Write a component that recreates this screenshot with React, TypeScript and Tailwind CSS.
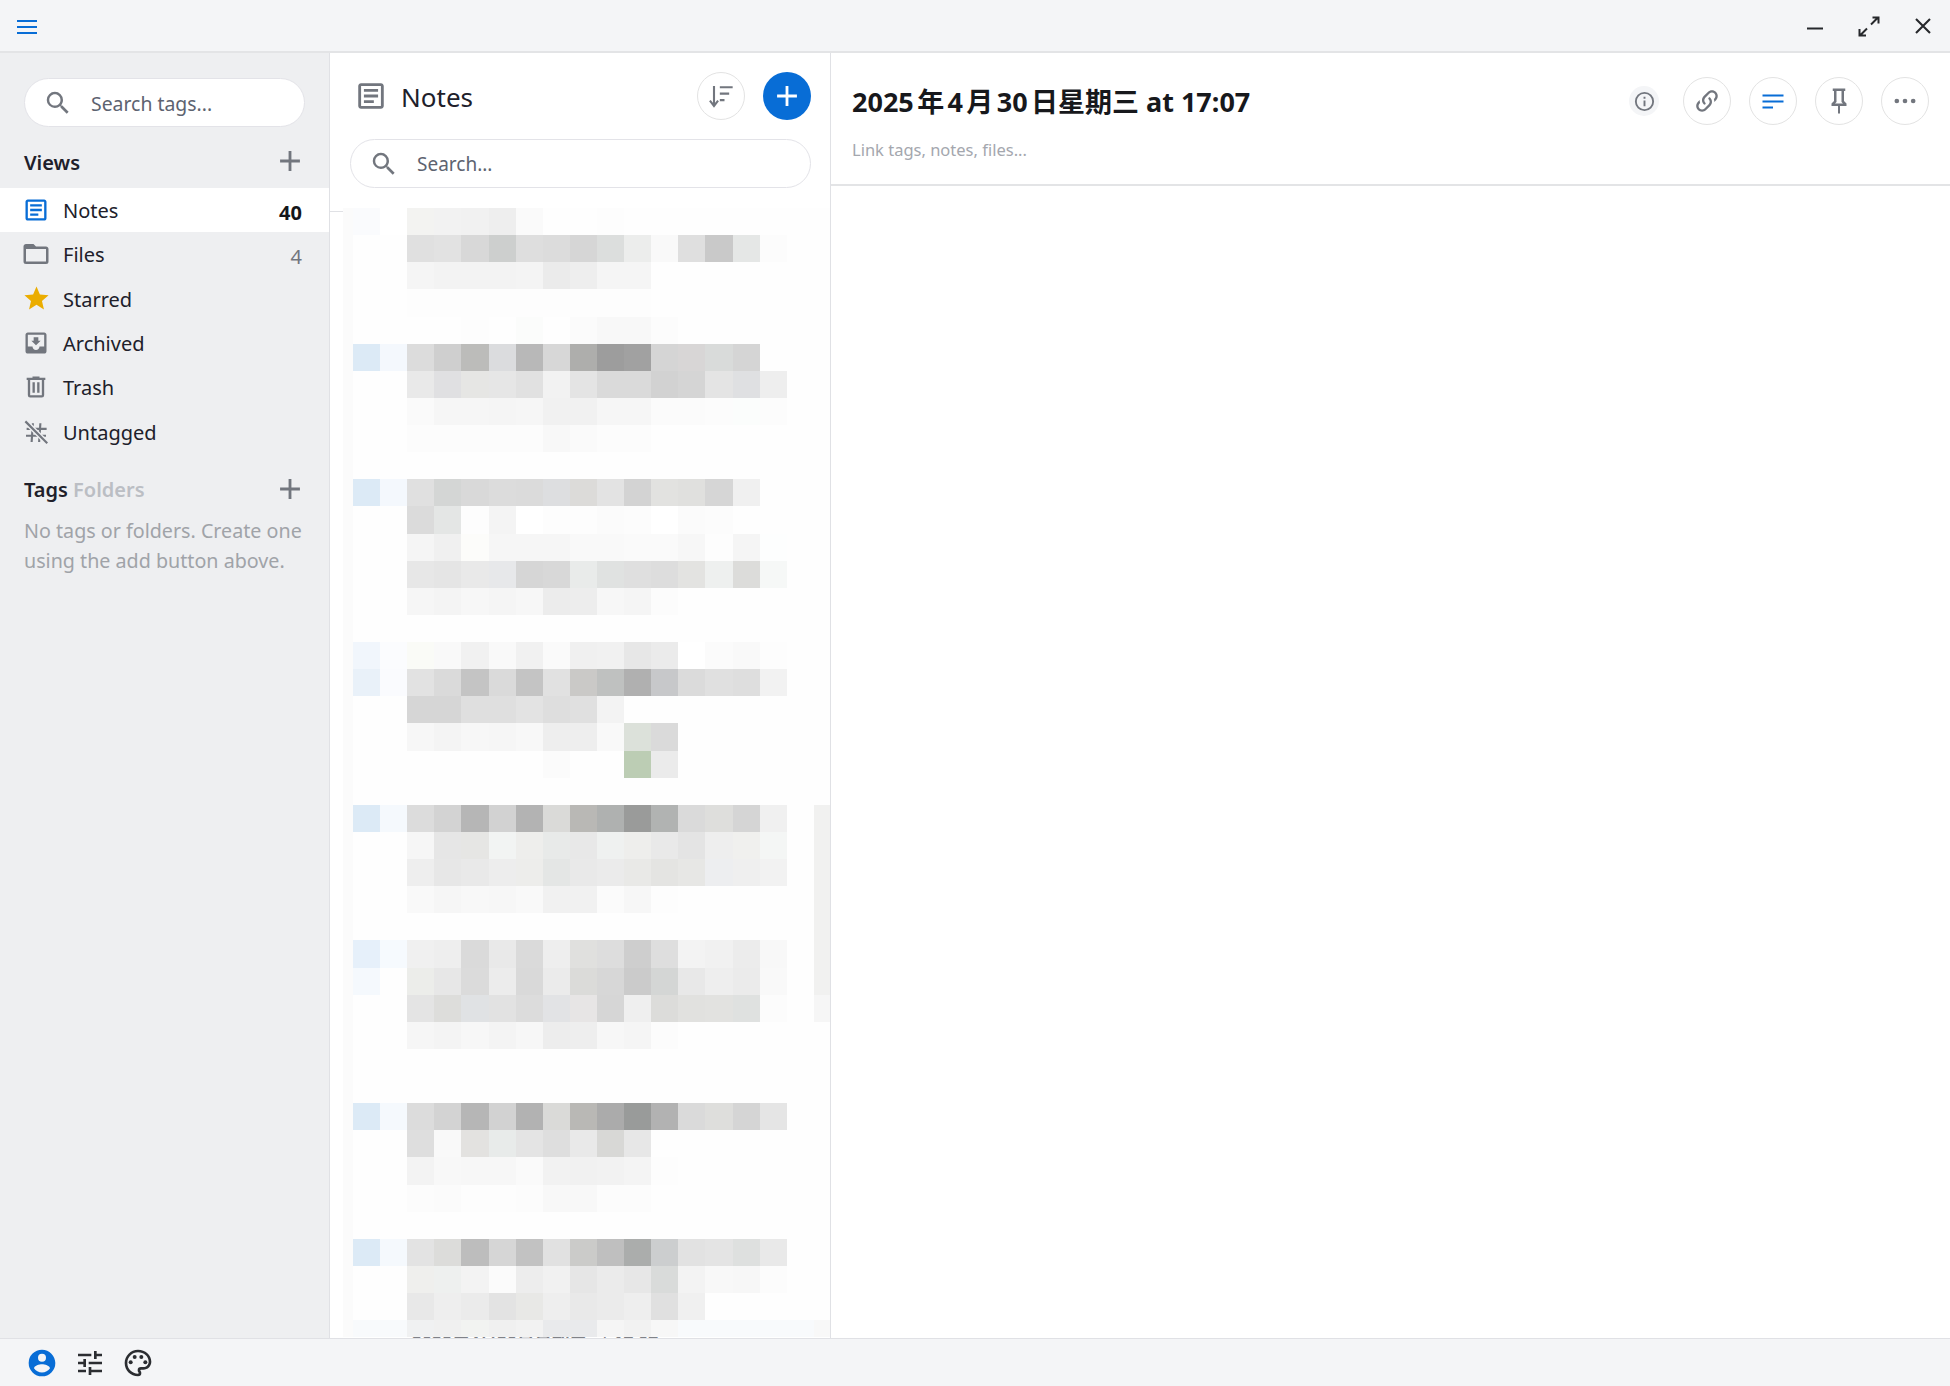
import React from "react";

const P = {
  note: "M5,3C3.89,3 3,3.89 3,5V19C3,20.11 3.89,21 5,21H19C20.11,21 21,20.11 21,19V5C21,3.89 20.11,3 19,3H5M5,5H19V19H5V5M7,7V9H17V7H7M7,11V13H17V11H7M7,15V17H14V15H7Z",
  folder: "M20,18H4V8H20M20,6H12L10,4H4C2.89,4 2,4.89 2,6V18A2,2 0 0,0 4,20H20A2,2 0 0,0 22,18V8C22,6.89 21.1,6 20,6Z",
  star: "M12,17.27L18.18,21L16.54,13.97L22,9.24L14.81,8.62L12,2L9.19,8.62L2,9.24L7.45,13.97L5.82,21L12,17.27Z",
  archive: "M19 3H5C3.9 3 3 3.9 3 5v14c0 1.1.9 2 2 2h14c1.1 0 2-.9 2-2V5c0-1.1-.9-2-2-2zm0 12h-4c0 1.66-1.35 3-3 3s-3-1.34-3-3H5V5h14v10zM16 10h-2V7h-4v3H8l4 4 4-4z",
  trash: "M9,3V4H4V6H5V19A2,2 0 0,0 7,21H17A2,2 0 0,0 19,19V6H20V4H15V3H9M7,6H17V19H7V6M9,8V17H11V8H9M13,8V17H15V8H13Z",
  search: "M9.5,3A6.5,6.5 0 0,1 16,9.5C16,11.11 15.41,12.59 14.44,13.73L14.71,14H15.5L20.5,19L19,20.5L14,15.5V14.71L13.73,14.44C12.59,15.41 11.11,16 9.5,16A6.5,6.5 0 0,1 3,9.5A6.5,6.5 0 0,1 9.5,3M9.5,5C7,5 5,7 5,9.5C5,12 7,14 9.5,14C12,14 14,12 14,9.5C14,7 12,5 9.5,5Z",
  plus: "M19,13H13V19H11V13H5V11H11V5H13V11H19V13Z",
  link: "M10.59,13.41C11,13.8 11,14.44 10.59,14.83C10.2,15.22 9.56,15.22 9.17,14.83C7.22,12.88 7.22,9.71 9.17,7.76V7.76L12.71,4.22C14.66,2.27 17.83,2.27 19.78,4.22C21.73,6.17 21.73,9.34 19.78,11.29L18.29,12.78C18.3,11.96 18.17,11.14 17.89,10.36L18.36,9.88C19.54,8.71 19.54,6.81 18.36,5.64C17.19,4.46 15.29,4.46 14.12,5.64L10.59,9.17C9.41,10.34 9.41,12.24 10.59,13.41M13.41,9.17C13.8,8.78 14.44,8.78 14.83,9.17C16.78,11.12 16.78,14.29 14.83,16.24V16.24L11.29,19.78C9.34,21.73 6.17,21.73 4.22,19.78C2.27,17.83 2.27,14.66 4.22,12.71L5.71,11.22C5.7,12.04 5.83,12.86 6.11,13.65L5.64,14.12C4.46,15.29 4.46,17.19 5.64,18.36C6.81,19.54 8.71,19.54 9.88,18.36L13.41,14.83C14.59,13.66 14.59,11.76 13.41,10.59C13,10.2 13,9.56 13.41,9.17Z",
  info: "M11,9H13V7H11M12,20C7.59,20 4,16.41 4,12C4,7.59 7.59,4 12,4C16.41,4 20,7.59 20,12C20,16.41 16.41,20 12,20M12,2A10,10 0 0,0 2,12A10,10 0 0,0 12,22A10,10 0 0,0 22,12A10,10 0 0,0 12,2M11,17H13V11H11V17Z",
  pin: "M16,12V4H17V2H7V4H8V12L6,14V16H11.2V22H12.8V16H18V14L16,12M8.8,14L10,12.8V4H14V12.8L15.2,14H8.8Z",
  account: "M12,19.2C9.5,19.2 7.29,17.92 6,16C6.03,14 10,12.9 12,12.9C14,12.9 17.97,14 18,16C16.71,17.92 14.5,19.2 12,19.2M12,5A3,3 0 0,1 15,8A3,3 0 0,1 12,11A3,3 0 0,1 9,8A3,3 0 0,1 12,5M12,2A10,10 0 0,0 2,12A10,10 0 0,0 12,22A10,10 0 0,0 22,12C22,6.47 17.5,2 12,2Z",
  tune: "M3,17V19H9V17H3M3,5V7H13V5H3M13,21V19H21V17H13V15H11V21H13M7,9V11H3V13H7V15H9V9H7M21,13V11H11V13H21M15,9H17V7H21V5H17V3H15V9Z",
  palette: "M12 22C6.49 22 2 17.51 2 12S6.49 2 12 2s10 4.04 10 9c0 3.31-2.69 6-6 6h-1.77c-.28 0-.5.22-.5.5 0 .12.05.23.13.33.41.47.64 1.06.64 1.67A2.5 2.5 0 0 1 12 22zm0-18c-4.41 0-8 3.59-8 8s3.59 8 8 8c.28 0 .5-.22.5-.5a.54.54 0 0 0-.14-.35c-.41-.46-.63-1.05-.63-1.65a2.5 2.5 0 0 1 2.5-2.5H16c2.21 0 4-1.79 4-4 0-3.86-3.59-7-8-7z",
};

function Icon({ d, size, className, children }: { d?: string; size: number; className?: string; children?: React.ReactNode }) {
  return (
    <svg width={size} height={size} viewBox="0 0 24 24" className={`shrink-0 fill-current ${className ?? ""}`}>
      {d && <path d={d} />}
      {children}
    </svg>
  );
}

const MOSAIC: Record<number, string> = {
  0: "fafbfd fff f3f3f1 f2f2f2 f1f1f1 eee fafafa . . fdfdfd",
  1: ". . e0e0e0 e2e2e2 d8d8d8 cdcfce dedede dcdcdc d6d6d6 dcdedd ecedec f9f9f9 dfdfdf c9c9c9 e5e7e6 fcfcfc",
  2: ". . f5f5f5 f3f3f3 f3f3f3 f3f3f3 f4f4f4 ebebeb eee f5f5f5 f5f5f5",
  3: ". . fdfdfd fdfdfd fdfdfd fdfdfd fdfdfd fdfdfd fdfdfd fdfdfd fdfdfd",
  4: ". . . . fdfdfd . fbfcfb . fbfbfb f8f8f8 f8f8f8 fcfcfc",
  5: "dceaf6 f4f8fd dcdcdc cfcfcf bcbcba dbdcde b8b8b8 d7d7d7 aeaeac 9d9d9d a1a1a1 d5d5d5 d8d6d6 d9dbda d5d5d5",
  6: ". . e9e9e9 e0e0e2 e6e6e4 e6e6e6 e1e1e1 f2f2f2 e4e4e4 dadada dadada d2d2d2 d5d5d5 e4e4e4 dfe0e2 eee",
  7: ". . fafafa f6f6f6 f6f6f6 f5f5f5 f6f6f6 f1f1f1 f1f1f1 f6f6f6 f6f6f6 fbfbfb fbfbfb fcfcfc fbfdfc fcfcfc",
  8: ". . fcfcfc fcfcfc fcfcfc fcfcfc fcfcfc f8f8f8 fafafa fcfcfc fcfcfc",
  10: "dceaf6 f4f8fd e0e0e0 d4d6d5 d9d9d9 dcdcdc dbdbdb dddee0 dcdbd9 e3e3e3 d3d3d3 e2e2e0 e0e0de d6d6d6 f0f0f0",
  11: ". . dbdbdb e4e6e5 fdfdfd f4f4f4 fff fdfdfd fdfdfd fbfbfb fcfcfc fff fbfbfb fcfcfc",
  12: ". . f5f5f5 f0f0f0 fcfcfa f6f6f6 f6f6f6 f6f6f6 f9f9f9 f9f9f9 fafafa fafafa f7f7f7 fdfdfd f5f5f5 fdfefe",
  13: ". . e7e7e7 e5e5e5 e9e9e9 e7e8ea d6d6d6 d8d8d8 e9ebea e0e2e1 dfdfdf ddd e3e3e1 eef0ef dcdcda f6f8f7",
  14: ". . f6f6f6 f4f4f4 f7f7f7 f5f5f5 f7f7f7 ececec ededed f7f7f7 f5f5f5 fcfcfc",
  16: "f1f6fc fbfcfe fafbf7 f9f9f9 f1f1f1 f9f9f9 f1f1f1 fafafa f0f0f0 f1f1f1 e7e7e7 ebebeb fff fbfbfb f9f9f9 fdfdfd",
  17: "e9f1f9 fafbfe e2e2e2 dadada c4c4c4 dadada c4c4c4 e1e1e1 cac9c7 bfc1c0 b0b0b0 c7c8ca dbdbdb e0e0e0 dedede f2f2f2",
  18: ". . d6d6d6 d6d6d6 dfdfdf dfdfdf e3e3e3 dedede e0e0e0 f3f3f3",
  19: ". . f7f7f7 f4f4f4 f7f7f7 f6f6f6 f8f8f8 eee eee f9f9f9 dce1da dadada",
  20: ". . . . . . . fbfbfb . . bccdb4 ebebeb",
  22: "dceaf6 f5f9fd dcdcdc d3d3d3 b6b6b6 d2d2d2 b3b3b3 dadad8 b9b8b5 afb1b0 9a9b9a b1b3b2 dadada dededc d5d5d5 f0f0f0 . f1f1f0",
  23: ". . f6f6f6 e6e6e6 e6e6e4 f2f4f3 eeeeec e8eae9 e8e8e8 eff1f0 eeeeec e9e9e9 e4e4e4 eee f0f0ee f4f6f5 . f1f1f0",
  24: ". . eee e7e7e7 e9e9e9 ededed ededeb e4e6e5 e9e9e9 ebebeb e9e9e7 e4e4e2 e7e7e5 edeef0 efefef f2f2f2 . f1f1f0",
  25: ". . f9f9f9 f6f6f6 f8f8f8 f7f7f7 f9f9f9 f1f1f1 f1f1f1 fbfbfb f7f7f7 fdfdfd . . . . . f1f1f0",
  26: ". . . . . . . . . . . . . . . . . f1f1f0",
  27: "e6f0fa f6fafe f0f0f0 eee dadada e9e9e9 dadada eee e0e0de ddd cecece dedede f3f3f3 f1f1f1 ececec f8f8f8 . f1f1f0",
  28: "f5f9fd . ecedea e7e7e7 dbdbdb ececec d9d9d9 ebebeb dbdbd9 d7d7d7 cbcbcb d4d6d5 e8e8e8 eee ebebeb f9f9f9 . f1f1f0",
  29: ". . e4e4e4 dddddb e0e2e4 e2e2e2 dcdcdc e2e3e5 e7e5e5 d6d6d6 efefef dcdcda e1e1df e2e2e0 dfe1e0 fcfcfc . f6f6f6",
  30: ". . f6f6f6 f4f4f4 f7f7f7 f4f4f4 f7f7f7 ededed eee f7f7f7 f5f5f5 fcfcfc",
  33: "dceaf6 f5f9fd dcdcdc d3d3d3 b6b6b6 d2d2d2 b2b2b2 dadad8 b9b8b5 ababab 999b9a b2b2b2 dadada dededc d5d5d5 e5e5e5",
  34: ". . dedede f9f9f9 e3e2e0 e8ebea e4e4e4 dedede e9e9e9 d8d8d6 e7e7e7",
  35: ". . f3f3f3 f8f8f8 f7f7f7 f7f7f7 fafafa f2f2f2 f1f1f1 f2f2f2 f4f4f4 fdfdfd",
  36: ". . fcfcfc fbfbfb fdfdfd fdfdfd fcfcfc f8f8f8 f8f8f8 fcfcfc fcfcfc fefefe",
  38: "dceaf6 f5f9fd e3e3e3 dcdcda bdbdbd d6d6d6 c2c2c2 e1e1e1 cbcbc9 bfbfbf abadac cccecf e2e2e2 e4e4e4 dee0df e9e9e9",
  39: ". . efefed eef0ef f3f3f3 fbfbfb ededed f1f1f1 e6e6e6 ebebeb e7e7e7 d9dbda f3f3f3 f8f8f8 f7f7f7 fcfcfc",
  40: ". . e8e8e8 eee ebebeb e3e3e3 e8e8e6 eee e9e9e9 ebebeb eee e0e0e0 f0f0f0",
  41: "f8fafc f8fafc f0f1f2 f0f0f0 f2f3f1 f0f0f0 f2f2f2 e9eaec e9eaec f5f5f5 f2f2f2 f7f7f7 f8fafc f8fafc f8fafc f8fafc f8fafc f8f8f8",
};

function Mosaic() {
  const cells: React.ReactNode[] = [];
  for (let r = 0; r < 42; r++) {
    const row = (MOSAIC[r] ?? "").split(" ");
    cells.push(<div key={`s${r}`} className="bg-[#fbfbfb]" />);
    for (let c = 0; c < 18; c++) {
      const v = row[c];
      cells.push(
        <div key={`${r}-${c}`} style={v && v !== "." ? { backgroundColor: `#${v}` } : undefined} />
      );
    }
  }
  return (
    <div className="flex-1 min-h-0 ml-[13px] -mt-[4px] relative overflow-hidden">
      <div className="grid bg-[#fefefe] h-full overflow-hidden grid-cols-[10px_repeat(17,27.12px)_1fr] auto-rows-[27.14px]">{cells}</div>
      <div className="absolute bottom-0 left-0 right-0 h-[1.5px] overflow-hidden bg-white pl-[69px]">
        <div className="-mt-[3px] text-[17.5px] leading-[17px] font-semibold text-[#808288] whitespace-nowrap">2025年4月30日星期三 at 17:07</div>
      </div>
    </div>
  );
}

const views = [
  { label: "Notes", d: P.note, size: 28, icon: "text-[#086dd6]", count: "40", active: true },
  { label: "Files", d: P.folder, size: 30, icon: "text-[#72767e]", count: "4" },
  { label: "Starred", d: P.star, size: 29, icon: "text-[#ebad00]" },
  { label: "Archived", d: P.archive, size: 28, icon: "text-[#72767e]" },
  { label: "Trash", d: P.trash, size: 28, icon: "text-[#72767e]" },
  { label: "Untagged", icon: "text-[#72767e]", size: 28 },
];

function Untagged() {
  return (
    <svg width="30" height="30" viewBox="0 0 24 24" className="shrink-0 text-[#72767e]" fill="none" stroke="currentColor" strokeWidth="1.7">
      <path d="M9.5 5 8.5 20M15.5 5 14.5 20M4.5 9.5h16M4 15h16" />
      <path d="M3.5 3.5l17.5 17.5" stroke="#eeeff1" strokeWidth="4" />
      <path d="M3.5 3.5l17.5 17.5" />
    </svg>
  );
}

function Round({ children }: { children: React.ReactNode }) {
  return (
    <div className="w-12 h-12 rounded-full border border-[#e3e3e3] bg-white flex items-center justify-center">{children}</div>
  );
}

export default function App() {
  return (
    <div className="w-[1950px] h-[1386px] flex flex-col overflow-hidden bg-white text-[20px] text-[#20202a] font-['Noto_Sans','Noto_Sans_CJK_SC',sans-serif]">
      <header className="h-[53px] shrink-0 flex items-center justify-between bg-[#f4f5f7] border-b-2 border-[#e3e4e6] pl-[15px] pr-[15px]">
        <svg width="24" height="24" viewBox="0 0 24 24" fill="none" stroke="#086dd6" strokeWidth="2">
          <path d="M2 7h20M2 13h20M2 19h20" />
        </svg>
        <div className="flex items-center gap-[30px] text-[#26282c]">
          <svg width="24" height="24" viewBox="0 0 24 24" fill="none" stroke="currentColor" strokeWidth="2">
            <path d="M4 14.5h16" />
          </svg>
          <svg width="24" height="24" viewBox="0 0 24 24" fill="none" stroke="currentColor" strokeWidth="2">
            <path d="M14 10.5 21 3.5M15.5 3.5h6v6M10 14.5 3 21.5M2.5 15v6.5H9" />
          </svg>
          <svg width="24" height="24" viewBox="0 0 24 24" fill="none" stroke="currentColor" strokeWidth="2.1">
            <path d="M5 5l14 14M19 5 5 19" />
          </svg>
        </div>
      </header>

      <main className="flex-1 min-h-0 flex">
        <aside className="w-[330px] shrink-0 bg-[#eeeff1] border-r border-[#e0e1e5] flex flex-col">
          <div className="pt-[25px] px-[24px]">
            <div className="h-[49px] w-[281px] rounded-full bg-white border border-[#e3e3e8] flex items-center pl-[18px] gap-[18px] text-[19.4px] text-[#5d6370]">
              <Icon d={P.search} size={30} className="text-[#72767e]" />
              <span className="mt-[2px]">Search tags...</span>
            </div>
          </div>
          <div className="h-[61px] flex items-center justify-between pl-[24px] pr-[26px]">
            <span className="font-semibold mt-[11px]">Views</span>
            <Icon d={P.plus} size={34} className="text-[#72767e] -mr-[4px] mt-[7px]" />
          </div>
          <div className="flex flex-col">
            {views.map((v) => (
              <div key={v.label} className={`h-[44.3px] flex items-center pl-[22px] pr-[27px] gap-[13px] ${v.active ? "bg-white" : ""}`}>
                <span className="w-[28px] flex justify-center">
                  {v.d ? <Icon d={v.d} size={v.size} className={v.icon} /> : <Untagged />}
                </span>
                <span className="flex-1 mt-[2px]">{v.label}</span>
                {v.count && (
                  <span className={`mt-[5px] ${v.active ? "font-bold text-[#15161a]" : "text-[#72767e]"}`}>{v.count}</span>
                )}
              </div>
            ))}
          </div>
          <div className="mt-[16px] h-[40px] flex items-center justify-between pl-[24px] pr-[26px]">
            <span className="font-semibold">
              Tags <span className="text-[#bbbec4]">Folders</span>
            </span>
            <Icon d={P.plus} size={34} className="text-[#72767e] -mr-[4px] -mt-[2px]" />
          </div>
          <p className="px-[24px] mt-[6px] text-[19.7px] leading-[30px] text-[#a0a3a8]">No tags or folders. Create one using the add button above.</p>
        </aside>

        <section className="w-[501px] shrink-0 flex flex-col border-r border-[#e0e1e5]">
          <div className="h-[159px] shrink-0 border-b border-[#e0e1e5] flex flex-col">
            <div className="flex items-center justify-between pt-[19px] pl-[24px] pr-[19px]">
              <div className="flex items-center gap-[13px]">
                <Icon d={P.note} size={34} className="text-[#72767e]" />
                <span className="text-[26px] leading-[34px] mt-[2px]">Notes</span>
              </div>
              <div className="flex items-center gap-[18px]">
                <Round>
                  <svg width="28" height="28" viewBox="0 0 24 24" fill="none" stroke="#72767e" strokeWidth="1.8">
                    <path d="M6 3.5v16M2.5 16l3.5 4.5 3.5-4.5M11 4.5h11M11 10h8M11 15.5h4" />
                  </svg>
                </Round>
                <div className="w-12 h-12 rounded-full bg-[#086dd6] flex items-center justify-center">
                  <Icon d={P.plus} size={34} className="text-white" />
                </div>
              </div>
            </div>
            <div className="mt-[19px] ml-[20px] mr-[19px] h-[49px] rounded-full bg-white border border-[#e3e3e8] flex items-center pl-[18px] gap-[18px] text-[19px] text-[#5d6370]">
              <Icon d={P.search} size={30} className="text-[#72767e]" />
              <span className="mt-[2px]">Search...</span>
            </div>
          </div>
          <Mosaic />
        </section>

        <section className="flex-1 min-w-0 flex flex-col">
          <div className="h-[133px] shrink-0 border-b-2 border-[#e3e4e6] flex items-start justify-between pl-[21px] pr-[21px]">
            <div className="flex flex-col">
              <h1 className="mt-[29px] h-[40px] leading-[40px] text-[27px] font-bold text-[#17181c] [text-autospace:normal]">2025年4月30日星期三 at 17:07</h1>
              <span className="mt-[16px] text-[16.5px] leading-[24px] text-[#a4a7ae]">Link tags, notes, files...</span>
            </div>
            <div className="flex items-center gap-[18px] mt-[24px]">
              <div className="w-[30px] h-[30px] rounded-full bg-[#f4f5f7] flex items-center justify-center mr-[6px]">
                <Icon d={P.info} size={23} className="text-[#72767e]" />
              </div>
              <Round><Icon d={P.link} size={28} className="text-[#72767e]" /></Round>
              <Round>
                <svg width="24" height="24" viewBox="0 0 24 24" fill="none" stroke="#086dd6" strokeWidth="2.2">
                  <path d="M1.5 6.5h21M1.5 12.5h21M1.5 18.5h10.5" />
                </svg>
              </Round>
              <Round><Icon d={P.pin} size={30} className="text-[#72767e]" /></Round>
              <Round>
                <Icon size={28} className="text-[#72767e]">
                  <circle cx="5" cy="12" r="2" />
                  <circle cx="12" cy="12" r="2" />
                  <circle cx="19" cy="12" r="2" />
                </Icon>
              </Round>
            </div>
          </div>
        </section>
      </main>

      <footer className="h-[48px] shrink-0 bg-[#f4f5f7] border-t border-[#e0e1e5] flex items-center pl-[26px] gap-[16px] text-[#2b2d31]">
        <Icon d={P.account} size={32} className="text-[#086dd6]" />
        <Icon d={P.tune} size={32} />
        <Icon d={P.palette} size={32}>
          <circle cx="6.5" cy="11.5" r="1.5" />
          <circle cx="9.5" cy="7.5" r="1.5" />
          <circle cx="14.5" cy="7.5" r="1.5" />
          <circle cx="17.5" cy="11.5" r="1.5" />
        </Icon>
      </footer>
    </div>
  );
}
